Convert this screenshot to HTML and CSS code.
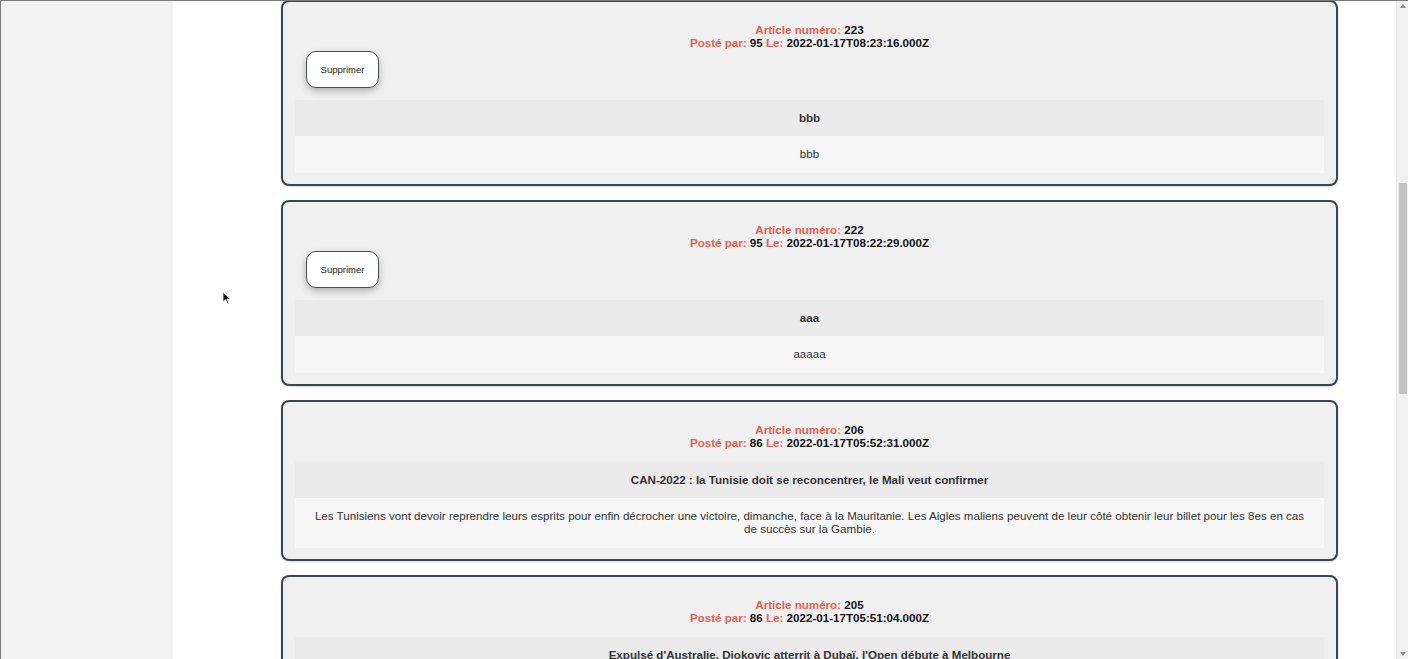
FILE: index.html
```html
<!DOCTYPE html>
<html lang="fr">
<head>
<meta charset="utf-8">
<title>Articles</title>
<link rel="stylesheet" href="styles.css">
</head>
<body>
<div class="window">
  <aside class="sidebar"></aside>
  <main class="main">
    <div class="list">
      <article class="card">
        <div class="meta">
          <div><span class="lbl">Article numéro:</span> 223</div>
          <div><span class="lbl">Posté par:</span> 95 <span class="lbl">Le:</span> 2022-01-17T08:23:16.000Z</div>
        </div>
        <button class="del">Supprimer</button>
        <div class="title">bbb</div>
        <div class="body">bbb</div>
      </article>
      <article class="card">
        <div class="meta">
          <div><span class="lbl">Article numéro:</span> 222</div>
          <div><span class="lbl">Posté par:</span> 95 <span class="lbl">Le:</span> 2022-01-17T08:22:29.000Z</div>
        </div>
        <button class="del">Supprimer</button>
        <div class="title">aaa</div>
        <div class="body">aaaaa</div>
      </article>
      <article class="card">
        <div class="meta">
          <div><span class="lbl">Article numéro:</span> 206</div>
          <div><span class="lbl">Posté par:</span> 86 <span class="lbl">Le:</span> 2022-01-17T05:52:31.000Z</div>
        </div>
        <div class="title">CAN-2022 : la Tunisie doit se reconcentrer, le Mali veut confirmer</div>
        <div class="body">Les Tunisiens vont devoir reprendre leurs esprits pour enfin décrocher une victoire, dimanche, face à la Mauritanie. Les Aigles maliens peuvent de leur côté obtenir leur billet pour les 8es en cas de succès sur la Gambie.</div>
      </article>
      <article class="card">
        <div class="meta">
          <div><span class="lbl">Article numéro:</span> 205</div>
          <div><span class="lbl">Posté par:</span> 86 <span class="lbl">Le:</span> 2022-01-17T05:51:04.000Z</div>
        </div>
        <div class="title">Expulsé d'Australie, Djokovic atterrit à Dubaï, l'Open débute à Melbourne</div>
        <div class="body">Le numéro un mondial a quitté l'Australie après le rejet de son recours.</div>
      </article>
    </div>
  </main>
  <div class="scrollbar">
    <div class="arrow up"></div>
    <div class="thumb"></div>
    <div class="arrow down"></div>
  </div>
  <svg class="cursor" width="10" height="14" viewBox="0 0 10 14"><path d="M1 1 L1 11 L3.5 8.6 L5.4 12.6 L6.8 12 L5 8.1 L8.4 8.1 Z" fill="#111" stroke="#fff" stroke-width="0.8"/></svg>
</div>
</body>
</html>
```

FILE: styles.css
```css
* { box-sizing: border-box; }
html, body { margin: 0; padding: 0; height: 100%; overflow: hidden; }
body {
  font-family: "Liberation Sans", Arial, sans-serif;
  background: #fff;
}
.window {
  position: relative;
  display: flex;
  height: 659px;
  border-top: 1px solid #7a7a7a;
  border-left: 1px solid #7a7a7a;
  overflow: hidden;
}
.sidebar {
  width: 172px;
  flex: none;
  background: #f2f2f2;
}
.main {
  flex: 1;
  padding-left: 108px;
  padding-right: 58px;
  margin-top: -1px;
}
.list {
  display: flex;
  flex-direction: column;
  gap: 14px;
}
.card {
  display: flex;
  flex-direction: column;
  background: #f0f0f1;
  border: 2px solid #3d4650;
  border-radius: 8px;
  padding: 12px 12px 11px;
  box-shadow: 0 1px 2px rgba(0,0,0,0.15);
}
.meta {
  margin-top: 9px;
  text-align: center;
  font-size: 11.6px;
  line-height: 13px;
  font-weight: bold;
  color: #111;
}
.lbl { color: #e5604e; }
.del {
  align-self: flex-start;
  margin: 2px 0 0 11px;
  width: 73px;
  height: 37px;
  background: #fff;
  border: 1px solid #4a4f55;
  border-radius: 10px;
  box-shadow: 0 3px 7px rgba(0,0,0,0.28);
  font-family: "Liberation Sans", Arial, sans-serif;
  font-size: 9.5px;
  color: #222;
  padding: 0;
}
.title {
  margin-top: 13px;
  background: #ebebec;
  text-align: center;
  font-size: 11.6px;
  line-height: 13px;
  font-weight: bold;
  color: #333;
  padding: 11px 14px 12px;
}
.del + .title { margin-top: 12px; }
.body {
  background: #f7f7f8;
  text-align: center;
  font-size: 11.6px;
  line-height: 13px;
  color: #333;
  padding: 11px 14px 13px;
}
.scrollbar {
  width: 12px;
  flex: none;
  background: #f1f1f1;
  display: flex;
  flex-direction: column;
  align-items: center;
  border-left: 1px solid #e6e6e6;
}
.arrow {
  width: 0; height: 0;
  border-left: 3px solid transparent;
  border-right: 3px solid transparent;
}
.arrow.up { border-bottom: 4px solid #8a8a8a; margin-top: 3px; }
.arrow.down { border-top: 4px solid #8a8a8a; margin-top: auto; margin-bottom: 3px; }
.thumb {
  width: 8px;
  height: 211px;
  margin-top: 175px;
  background: #c1c1c1;
  border-radius: 1px;
}
.cursor {
  position: absolute;
  left: 221px;
  top: 290px;
}
```
